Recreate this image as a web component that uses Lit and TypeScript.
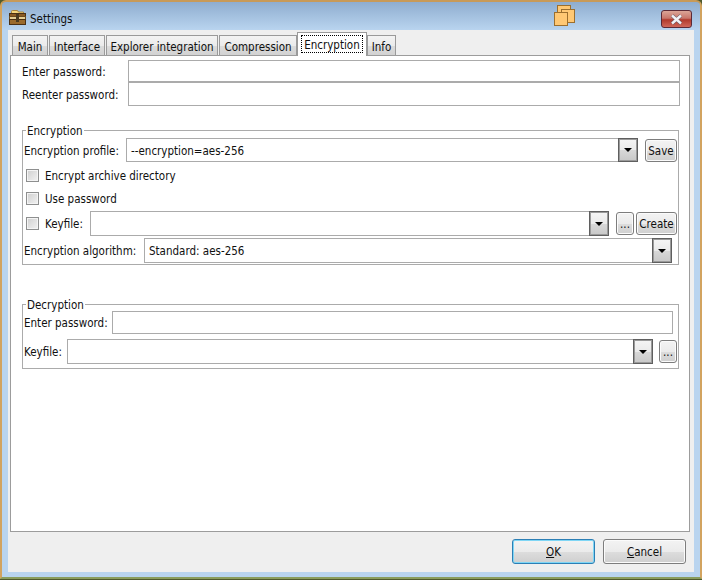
import { LitElement, html, css } from "lit";
import { customElement } from "lit/decorators.js";

@customElement("app-root")
export class AppRoot extends LitElement {
  static styles = css`
    :host { display: block; width: 702px; height: 580px; background: #4f5a2e; font-family: "DejaVu Sans Condensed", "DejaVu Sans", sans-serif; font-stretch: condensed; font-size: 11.5px; color: #101010; }
    * { box-sizing: border-box; }
    .lab, .tab, .title, legend, .cbrow span { white-space: nowrap; }
    .frame { position: relative; width: 702px; height: 579px; display: flex; flex-direction: column; border: 2px solid #d2a35f; border-top-color: #c89a58; border-bottom-color: #8a9d5e; border-radius: 6px 6px 0 0; background: linear-gradient(180deg, #8fadcf 0, #b9d4ef 28px); padding: 0 6px 5px; overflow: hidden; }
    .titlebar { height: 28px; flex: none; display: flex; align-items: center; padding: 5px 0 0 0; gap: 4px; }
    .titlebar svg.app { margin-left: 1px; flex: none; margin-top: -3px; }
    .stack { position: absolute; left: 552px; top: 3px; }
    .close { position: absolute; left: 659px; top: 8px; width: 31px; height: 18px; border: 1px solid #5b2a36; border-radius: 3px; background: linear-gradient(180deg, #dba597 0, #c8766a 45%, #b13a2c 55%, #d0685a 100%); display: flex; align-items: center; justify-content: center; }
    .client { flex: 1; background: #efefef; display: flex; flex-direction: column; padding: 5px 4px 0 2px; min-height: 0; }
    .tabs { display: flex; height: 20px; padding-left: 2px; flex: none; position: relative; z-index: 1; }
    .tab { height: 20px; border: 1px solid #9a9a9a; border-bottom: none; margin-right: 1px; background: linear-gradient(180deg, #f3f3f3 0, #ebebeb 50%, #dcdcdc 51%, #d2d2d2 100%); display: flex; align-items: center; justify-content: center; padding-top: 3px; }
    .t1 { width: 36px; } .t2 { width: 56px; } .t3 { width: 112px; } .t4 { width: 78px; } .t5 { width: 70px; } .t6 { width: 29px; }
    .tab.active { height: 24px; margin: -3px 0 -1px -1px; background: #fff; padding: 0; z-index: 2; }
    .focus { border: 1px dotted #000; height: 18px; width: 62px; display: flex; align-items: center; justify-content: center; margin-top: -2px; padding-top: 2px; overflow: hidden; white-space: nowrap; }
    .panel { flex: none; height: 477px; border: 1px solid #9c9c9c; background: #fff; padding: 4px 9px 0 11px; }
    .pw { display: flex; height: 23px; align-items: center; }
    .pw .lab { width: 106px; padding-bottom: 0; }
    .lab { padding-top: 1px; }
    .input { border: 1px solid #ababab; background: #fff; flex: 1; display: flex; align-items: center; min-width: 0; align-self: stretch; padding: 1px 0 0 4px; }
    .pw .input { border-width: 1px; border-bottom-width: 2px; }
    .pw + .pw .input { border-top-width: 0; border-bottom-width: 1px; }
    fieldset { border: 1px solid #ababab; margin: 17px 1px 0 0; padding: 0 1px 1px; min-width: 0; }
    fieldset + fieldset { margin-top: 32px; padding-bottom: 4px; }
    legend { padding: 1px 1px 0; margin-left: 2px; line-height: 14px; height: 14px; }
    .row { display: flex; align-items: center; }
    .combo .arrow { width: 20px; align-self: stretch; border: 1px solid #5f5f5f; box-shadow: inset 0 0 0 1px #9a9a9a; background: linear-gradient(180deg, #f5f5f5 0, #eaeaea 50%, #d8d8d8 51%, #c8c8c8 100%); margin: -2px -1px -1px auto; display: flex; align-items: center; justify-content: center; flex: none; }
    .tri { width: 0; height: 0; border-left: 4px solid transparent; border-right: 4px solid transparent; border-top: 4px solid #000; }
    .btn { border: 1px solid #7d7d7d; border-radius: 3px; background: linear-gradient(180deg, #f3f3f3 0, #ebebeb 50%, #dddddd 51%, #cfcfcf 100%); display: flex; align-items: center; justify-content: center; box-shadow: inset 0 0 0 1px #fbfbfb; flex: none; }
    .cb { width: 13px; height: 13px; border: 1px solid #8e8f8f; background: linear-gradient(135deg, #cfcfcf, #f2f2f2); box-shadow: inset 0 0 0 1px #f4f4f4; flex: none; }
    .r1 { height: 24px; margin-top: 1px; margin-bottom: 2px; }
    .r1 .lab { width: 102px; }
    .r1 .btn { width: 32px; height: 23px; margin: 1px 0 0 7px; }
    .cbrow { height: 23px; padding-left: 2px; }
    .cbrow .cb { margin-right: 6px; }
    .r4 { height: 25px; padding-left: 2px; margin-top: 1px; }
    .r4 .cb { margin-right: 6px; }
    .r4 .lab { width: 45px; }
    .r4 .dots { width: 18px; height: 23px; margin-left: 7px; }
    .r4 .create { width: 41px; height: 23px; margin-left: 2px; }
    .r5 { height: 25px; margin-top: 2px; padding-right: 5px; }
    .r5 .lab { width: 120px; }
    .d1 { height: 23px; padding-right: 4px; }
    .d1 .lab { width: 88px; }
    .d2 { height: 25px; margin-top: 5px; }
    .d2 .lab { width: 43px; }
    .d2 .dots { width: 18px; height: 23px; margin-left: 6px; }
    .footer { flex: 1; display: flex; justify-content: flex-end; gap: 8px; padding: 7px 4px 0 0; }
    .footer .btn { width: 83px; height: 25px; }
    .footer .def { border-color: #2c7fb5; box-shadow: inset 0 0 0 1px #7fd6f5; }
  `;

  private arrow() {
    return html`<div class="arrow"><div class="tri"></div></div>`;
  }

  render() {
    return html`
      <div class="frame">
        <div class="titlebar">
          <svg class="app" width="17" height="15" viewBox="0 0 17 15">
            <path d="M2.5 4 V1.5 Q2.5 0.5 3.5 0.5 H8 Q9 0.5 9.5 2 H14.5 V4 Z" fill="#f4d77e" stroke="#a8853f"/>
            <rect x="0.5" y="3.5" width="16" height="3" fill="#8a5a24" stroke="#4a3014"/>
            <rect x="0.5" y="6.5" width="16" height="3" fill="#e6cf94" stroke="#6b4a1e"/>
            <rect x="0.5" y="9.5" width="16" height="5" fill="#9a6a2c" stroke="#4a3014"/>
            <rect x="7" y="4" width="3" height="8" fill="#4a3a20"/>
          </svg>
          <span class="title">Settings</span>
        </div>
        <svg class="stack" width="22" height="22" viewBox="0 0 22 22">
          <rect x="3.5" y="0.5" width="13" height="13" fill="#ffc874" stroke="#9c6f2e"/>
          <rect x="7.5" y="4.5" width="13" height="13" fill="#ffc874" stroke="#9c6f2e"/>
          <rect x="0.5" y="7.5" width="13" height="13" fill="#ffc874" stroke="#9c6f2e"/>
        </svg>
        <div class="close">
          <svg width="13" height="11" viewBox="0 0 13 11"><path d="M2 1.5 L11 9.5 M11 1.5 L2 9.5" stroke="#5d5560" stroke-width="3.6"/><path d="M2 1.5 L11 9.5 M11 1.5 L2 9.5" stroke="#f2f2f6" stroke-width="2.4"/></svg>
        </div>
        <div class="client">
          <div class="tabs">
            <div class="tab t1">Main</div>
            <div class="tab t2">Interface</div>
            <div class="tab t3">Explorer integration</div>
            <div class="tab t4">Compression</div>
            <div class="tab t5 active"><div class="focus">Encryption</div></div>
            <div class="tab t6">Info</div>
          </div>
          <div class="panel">
            <div class="pw"><span class="lab">Enter password:</span><div class="input"></div></div>
            <div class="pw"><span class="lab">Reenter password:</span><div class="input"></div></div>
            <fieldset>
              <legend>Encryption</legend>
              <div class="row r1">
                <span class="lab">Encryption profile:</span>
                <div class="input combo">--encryption=aes-256${this.arrow()}</div>
                <div class="btn">Save</div>
              </div>
              <div class="row cbrow"><div class="cb"></div><span>Encrypt archive directory</span></div>
              <div class="row cbrow"><div class="cb"></div><span>Use password</span></div>
              <div class="row r4">
                <div class="cb"></div><span class="lab">Keyfile:</span>
                <div class="input combo">${this.arrow()}</div>
                <div class="btn dots">...</div>
                <div class="btn create">Create</div>
              </div>
              <div class="row r5">
                <span class="lab">Encryption algorithm:</span>
                <div class="input combo">Standard: aes-256${this.arrow()}</div>
              </div>
            </fieldset>
            <fieldset>
              <legend>Decryption</legend>
              <div class="row d1"><span class="lab">Enter password:</span><div class="input"></div></div>
              <div class="row d2">
                <span class="lab">Keyfile:</span>
                <div class="input combo">${this.arrow()}</div>
                <div class="btn dots">...</div>
              </div>
            </fieldset>
          </div>
          <div class="footer">
            <div class="btn def"><span><u>O</u>K</span></div>
            <div class="btn"><span><u>C</u>ancel</span></div>
          </div>
        </div>
      </div>
    `;
  }
}
